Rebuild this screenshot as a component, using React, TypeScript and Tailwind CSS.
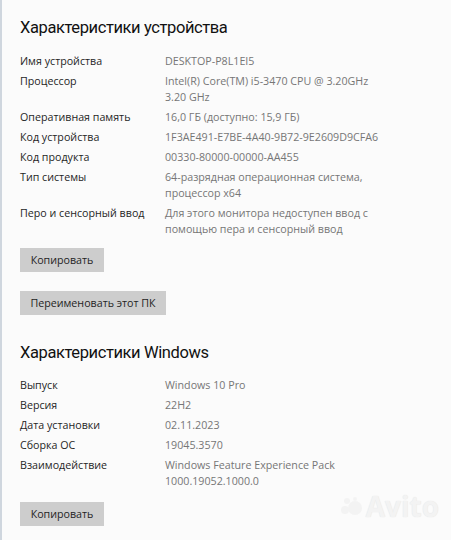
// Параметры системы — "О программе" (Windows 10)
const deviceSpecs = [
  { label: 'Имя устройства', value: ['DESKTOP-P8L1EI5'] },
  { label: 'Процессор', value: ['Intel(R) Core(TM) i5-3470 CPU @ 3.20GHz', '3.20 GHz'] },
  { label: 'Оперативная память', value: ['16,0 ГБ (доступно: 15,9 ГБ)'] },
  { label: 'Код устройства', value: ['1F3AE491-E7BE-4A40-9B72-9E2609D9CFA6'] },
  { label: 'Код продукта', value: ['00330-80000-00000-AA455'] },
  { label: 'Тип системы', value: ['64-разрядная операционная система,', 'процессор x64'] },
  { label: 'Перо и сенсорный ввод', value: ['Для этого монитора недоступен ввод с', 'помощью пера и сенсорный ввод'] },
];

const windowsSpecs = [
  { label: 'Выпуск', value: ['Windows 10 Pro'] },
  { label: 'Версия', value: ['22H2'] },
  { label: 'Дата установки', value: ['02.11.2023'] },
  { label: 'Сборка ОС', value: ['19045.3570'] },
  { label: 'Взаимодействие', value: ['Windows Feature Experience Pack', '1000.19052.1000.0'] },
];

function SpecRow({ label, value }: { label: string; value: string[] }) {
  return (
    <div className="flex">
      <div className="w-[145px] shrink-0 text-[#1f1f1f]">{label}</div>
      <div className="text-[#767676]">
        {value.map((line) => (
          <div key={line}>{line}</div>
        ))}
      </div>
    </div>
  );
}

function GrayButton({ children, width }: { children: string; width: string }) {
  return (
    <button className={`${width} h-[24px] bg-[#cdcdcd] text-[#1f1f1f] text-[10.7px] flex items-center justify-center`}>
      {children}
    </button>
  );
}

const headingFont = { fontFamily: 'Roboto, "Liberation Sans", sans-serif' };

export default function App() {
  return (
    <div
      className="w-[451px] h-[540px] bg-[#fbfbfb] border-l-2 border-[#cfd6de] overflow-hidden relative text-[10.7px] leading-[16px]"
      style={{ fontFamily: '"Open Sans", "Noto Sans", sans-serif' }}
    >
      <div className="pl-[18px] pt-[15px]">
        {/* Device specs */}
        <h1 className="text-[16.5px] leading-[26px] tracking-[-0.4px] text-[#111]" style={headingFont}>
          Характеристики устройства
        </h1>
        <div className="mt-[12px] flex flex-col gap-[4px]">
          {deviceSpecs.map((s) => (
            <SpecRow key={s.label} {...s} />
          ))}
        </div>
        <div className="mt-[11px]">
          <GrayButton width="w-[84px]">Копировать</GrayButton>
        </div>
        <div className="mt-[19px]">
          <GrayButton width="w-[146px]">Переименовать этот ПК</GrayButton>
        </div>

        {/* Windows specs */}
        <h1 className="mt-[25px] text-[16.5px] leading-[26px] tracking-[-0.4px] text-[#111]" style={headingFont}>
          Характеристики Windows
        </h1>
        <div className="mt-[11px] flex flex-col gap-[4px]">
          {windowsSpecs.map((s) => (
            <SpecRow key={s.label} {...s} />
          ))}
        </div>
        <div className="mt-[13px]">
          <GrayButton width="w-[84px]">Копировать</GrayButton>
        </div>
      </div>

      {/* watermark */}
      <div className="absolute right-[12px] bottom-[20px] flex items-center gap-[2px] opacity-80">
        <svg width="24" height="20" viewBox="0 0 24 20">
          <circle cx="15" cy="12" r="7" fill="#f2f2f2" />
          <circle cx="5" cy="14" r="4" fill="#f2f2f2" />
          <circle cx="7" cy="5" r="3" fill="#f2f2f2" />
          <circle cx="15" cy="3" r="2" fill="#f2f2f2" />
        </svg>
        <span className="text-[28px] leading-[28px] font-bold text-[#f2f2f2]" style={{ textShadow: '0 0 1px #d8d8d8' }}>
          Avito
        </span>
      </div>
    </div>
  );
}
